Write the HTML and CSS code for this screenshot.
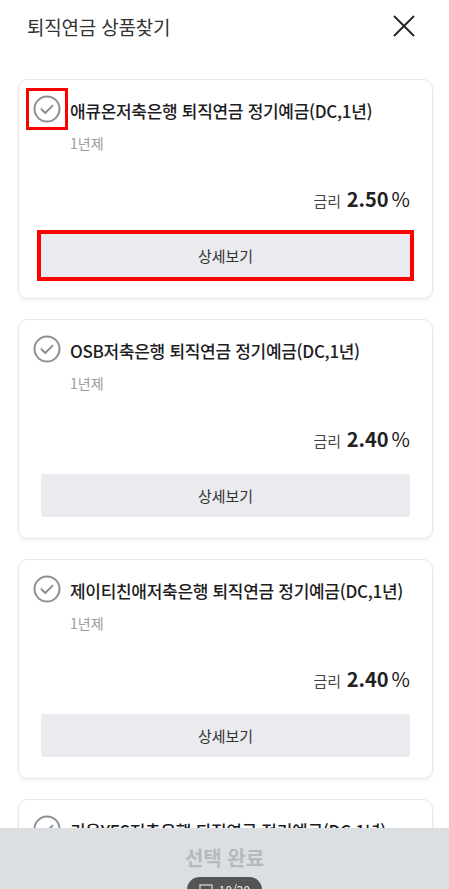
FILE: index.html
```html
<!DOCTYPE html>
<html lang="ko">
<head>
    <meta charset="UTF-8">
    <meta name="viewport" content="width=device-width, initial-scale=1.0">
    <title>퇴직연금 상품찾기</title>
    <link rel="stylesheet" href="styles.css">
</head>
<body>
    <header class="top">
        <h1 class="page-title">퇴직연금 상품찾기</h1>
        <button class="close" aria-label="닫기">
            <svg width="24" height="24" viewBox="0 0 24 24"><path d="M2 2L22 22M22 2L2 22" stroke="#222" stroke-width="1.8" fill="none"/></svg>
        </button>
    </header>

    <main class="list">
        <div class="card">
            <div class="card-head">
                <span class="check marked">
                    <svg width="28" height="28" viewBox="0 0 28 28"><circle cx="14" cy="14" r="12.5" stroke="#8c9096" stroke-width="2" fill="none"/><path d="M8.5 14.2L12.3 18L19.5 10.6" stroke="#8c9096" stroke-width="2" fill="none" stroke-linecap="round" stroke-linejoin="round"/></svg>
                </span>
                <div class="info">
                    <p class="name">애큐온저축은행 퇴직연금 정기예금(DC,1년)</p>
                    <p class="term">1년제</p>
                </div>
            </div>
            <p class="rate"><span class="rate-label">금리</span> <b>2.50</b><span class="unit">%</span></p>
            <button class="detail marked">상세보기</button>
        </div>

        <div class="card">
            <div class="card-head">
                <span class="check">
                    <svg width="28" height="28" viewBox="0 0 28 28"><circle cx="14" cy="14" r="12.5" stroke="#8c9096" stroke-width="2" fill="none"/><path d="M8.5 14.2L12.3 18L19.5 10.6" stroke="#8c9096" stroke-width="2" fill="none" stroke-linecap="round" stroke-linejoin="round"/></svg>
                </span>
                <div class="info">
                    <p class="name">OSB저축은행 퇴직연금 정기예금(DC,1년)</p>
                    <p class="term">1년제</p>
                </div>
            </div>
            <p class="rate"><span class="rate-label">금리</span> <b>2.40</b><span class="unit">%</span></p>
            <button class="detail">상세보기</button>
        </div>

        <div class="card">
            <div class="card-head">
                <span class="check">
                    <svg width="28" height="28" viewBox="0 0 28 28"><circle cx="14" cy="14" r="12.5" stroke="#8c9096" stroke-width="2" fill="none"/><path d="M8.5 14.2L12.3 18L19.5 10.6" stroke="#8c9096" stroke-width="2" fill="none" stroke-linecap="round" stroke-linejoin="round"/></svg>
                </span>
                <div class="info">
                    <p class="name">제이티친애저축은행 퇴직연금 정기예금(DC,1년)</p>
                    <p class="term">1년제</p>
                </div>
            </div>
            <p class="rate"><span class="rate-label">금리</span> <b>2.40</b><span class="unit">%</span></p>
            <button class="detail">상세보기</button>
        </div>

        <div class="card">
            <div class="card-head">
                <span class="check">
                    <svg width="28" height="28" viewBox="0 0 28 28"><circle cx="14" cy="14" r="12.5" stroke="#8c9096" stroke-width="2" fill="none"/><path d="M8.5 14.2L12.3 18L19.5 10.6" stroke="#8c9096" stroke-width="2" fill="none" stroke-linecap="round" stroke-linejoin="round"/></svg>
                </span>
                <div class="info">
                    <p class="name">키움YES저축은행 퇴직연금 정기예금(DC,1년)</p>
                    <p class="term">1년제</p>
                </div>
            </div>
            <p class="rate"><span class="rate-label">금리</span> <b>2.40</b><span class="unit">%</span></p>
            <button class="detail">상세보기</button>
        </div>
    </main>

    <footer class="bottom">
        <button class="done" disabled>선택 완료</button>
        <div class="pager">
            <svg width="14" height="12" viewBox="0 0 14 12"><rect x="1" y="1" width="12" height="10" stroke="#ccc" stroke-width="1.4" fill="none"/></svg>
            10/20
        </div>
    </footer>
</body>
</html>
```

FILE: styles.css
```css
body {
    font-family: "Noto Sans CJK KR", "Noto Sans", sans-serif;
    margin: 0;
    padding: 0;
    background: #fff;
    color: #222;
    height: 889px;
    overflow: hidden;
}
p {
    margin: 0;
}
.top {
    display: flex;
    justify-content: space-between;
    align-items: center;
    height: 52px;
    padding: 0 33px 0 27px;
}
.page-title {
    margin: 0;
    font-size: 19px;
    font-weight: 400;
    letter-spacing: -0.2px;
    color: #333;
}
.close {
    background: none;
    border: none;
    padding: 0;
    display: flex;
}
.list {
    padding: 27px 16px 0 18px;
    display: flex;
    flex-direction: column;
    gap: 20px;
}
.card {
    height: 218px;
    border: 1px solid #e6e7e9;
    border-radius: 10px;
    box-shadow: 0 2px 4px rgba(0, 0, 0, 0.06);
    padding: 0 22px 0 22px;
    display: flex;
    flex-direction: column;
}
.card-head {
    display: flex;
    gap: 2px;
    padding-top: 8px;
    margin-left: -15px;
}
.check {
    width: 42px;
    height: 42px;
    display: flex;
    align-items: center;
    justify-content: center;
    flex-shrink: 0;
    box-sizing: border-box;
    border: 3px solid transparent;
}
.check.marked {
    border-color: #f00;
}
.info {
    padding-top: 2px;
}
.name {
    font-size: 17px;
    font-weight: 500;
    letter-spacing: -0.3px;
    line-height: 42px;
    color: #1d1d1f;
    white-space: nowrap;
}
.term {
    font-size: 14px;
    color: #9a9a9a;
    margin-top: 0;
    line-height: 22px;
}
.rate {
    margin-top: auto;
    margin-bottom: -2px;
    text-align: right;
    font-size: 20px;
    color: #222;
    line-height: 28px;
}
.rate-label {
    font-size: 15px;
    color: #444;
}
.rate b {
    font-weight: 700;
}
.unit {
    margin-left: 3px;
}
.detail {
    margin: 21px 0 21px;
    height: 43px;
    background: #e9ebee;
    border: none;
    border-radius: 2px;
    font-family: inherit;
    font-size: 15px;
    color: #333;
}
.detail.marked {
    border-radius: 0;
    outline: 4px solid #f00;
    outline-offset: 0;
}
.bottom {
    position: fixed;
    left: 0;
    right: 0;
    bottom: 0;
    height: 61px;
    background: #dcdfe2;
    display: flex;
    flex-direction: column;
    align-items: center;
}
.done {
    background: none;
    border: none;
    font-family: inherit;
    font-size: 20px;
    font-weight: 700;
    color: #b4b9be;
    padding: 16px 0 0;
    line-height: 28px;
}
.pager {
    margin-top: 5px;
    background: #555;
    color: #eee;
    border-radius: 14px;
    padding: 4px 12px;
    font-size: 12px;
    display: flex;
    gap: 6px;
    align-items: center;
}
```
